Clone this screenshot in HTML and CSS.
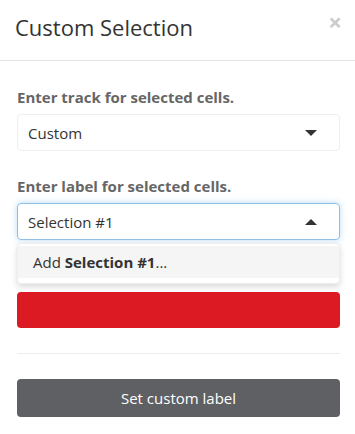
FILE: index.html
```html
<!DOCTYPE html>
<html>
<head>
    <title>Custom Selection</title>
    <link rel="stylesheet" href="styles.css">
</head>
<body>
    <div class="modal">
        <div class="modal-header">
            <h4 class="modal-title">Custom Selection</h4>
            <span class="close">&times;</span>
        </div>
        <div class="modal-body">
            <label class="field-label">Enter track for selected cells.</label>
            <div class="select">
                <span>Custom</span>
                <span class="caret"></span>
            </div>
            <label class="field-label">Enter label for selected cells.</label>
            <div class="select-wrap">
                <div class="select open">
                    <span>Selection #1</span>
                    <span class="caret up"></span>
                </div>
                <div class="menu">
                    <div class="menu-item">Add <b>Selection #1</b>...</div>
                </div>
            </div>
            <div class="color-bar"></div>
        </div>
        <div class="modal-footer">
            <button type="button" class="btn">Set custom label</button>
        </div>
    </div>
</body>
</html>
```

FILE: styles.css
```css
body {
    margin: 0;
    font-family: "Open Sans", sans-serif;
    background-color: #ffffff;
    color: #333333;
}
.modal {
    width: 355px;
}
.modal-header {
    display: flex;
    justify-content: space-between;
    align-items: flex-start;
    height: 60px;
    padding: 0 13px 0 15px;
    border-bottom: 1px solid #e5e5e5;
}
.modal-title {
    margin: 12px 0 0 0;
    font-size: 22px;
    font-weight: 400;
    line-height: 30px;
}
.close {
    margin-top: 6px;
    font-size: 24px;
    font-weight: 700;
    color: #cccccc;
    line-height: 32px;
}
.modal-body {
    padding: 26px 0 25px 0;
    margin: 0 15px 0 17px;
    border-bottom: 1px solid #ededed;
}
.field-label {
    display: block;
    font-size: 15px;
    font-weight: 700;
    color: #666666;
    line-height: 20px;
    margin-bottom: 7px;
}
.select {
    display: flex;
    justify-content: space-between;
    align-items: center;
    height: 35px;
    padding: 0 22px 0 10px;
    border: 1px solid #eeeeee;
    border-radius: 4px;
    font-size: 15px;
    margin-bottom: 25px;
}
.select.open {
    border-color: #8fbfe6;
    box-shadow: 0 0 6px rgba(102, 175, 233, 0.45);
    margin-bottom: 0;
}
.caret {
    width: 0;
    height: 0;
    border-left: 6px solid transparent;
    border-right: 6px solid transparent;
    border-top: 6px solid #333333;
}
.caret.up {
    border-top: none;
    border-bottom: 6px solid #333333;
}
.select-wrap {
    position: relative;
}
.menu {
    position: absolute;
    top: 40px;
    left: 0;
    right: 0;
    padding: 2px 0 5px 0;
    background-color: #ffffff;
    border: 1px solid #eeeeee;
    border-radius: 4px;
    box-shadow: 0 3px 6px rgba(0, 0, 0, 0.15);
    z-index: 2;
}
.menu-item {
    padding: 5px 15px;
    background-color: #f5f5f5;
    font-size: 15px;
    line-height: 22px;
}
.color-bar {
    height: 36px;
    margin-top: 52px;
    background-color: #dc1a24;
    border-radius: 4px;
}
.modal-footer {
    padding: 25px 15px 16px 17px;
}
.btn {
    display: block;
    width: 100%;
    height: 38px;
    border: none;
    border-radius: 4px;
    background-color: #5f6064;
    color: #ffffff;
    font-family: "Open Sans", sans-serif;
    font-size: 15px;
}
```
